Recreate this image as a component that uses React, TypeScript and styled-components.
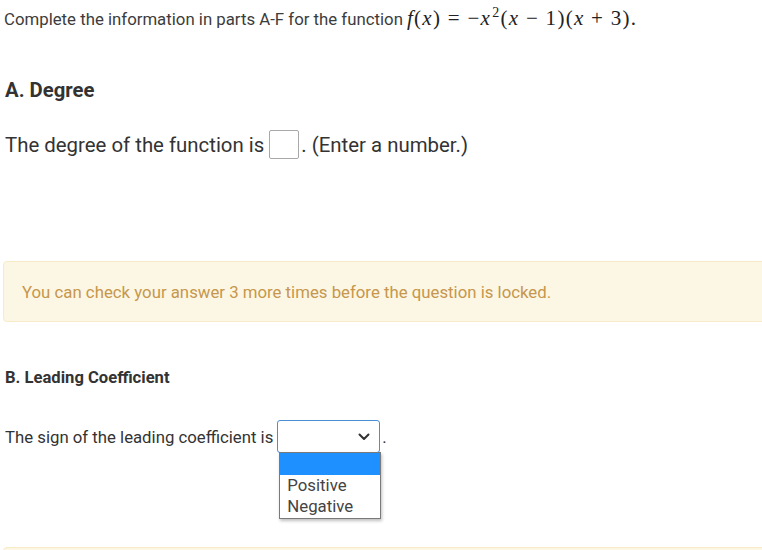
import React from "react";
import styled, { createGlobalStyle } from "styled-components";

const Global = createGlobalStyle`
  html, body { margin: 0; padding: 0; background: #fff; }
  body { font-family: Roboto, "Liberation Sans", Arial, sans-serif; color: #333; }
`;

const Page = styled.div`
  padding: 7px 0 0 4px;
  display: flex;
  flex-direction: column;
`;

const Intro = styled.div`
  font-size: 16.8px;
  line-height: 22px;
  color: #3c3c3c;
  display: flex;
  align-items: baseline;
  gap: 4px;
`;

const Math = styled.span`
  font-family: "Liberation Serif", "Times New Roman", serif;
  font-size: 21px;
  letter-spacing: 1.3px;
  color: #222;
  white-space: nowrap;
`;

const V = styled.i`
  font-style: italic;
`;

const Op = styled.span`
  padding: 0 6.5px;
`;

const Sup = styled.sup`
  font-size: 14px;
  vertical-align: 8px;
  line-height: 0;
  margin-left: 1px;
`;

const Heading = styled.h2<{ $size: number; $top: number }>`
  margin: ${(p) => p.$top}px 0 0 1px;
  font-size: ${(p) => p.$size}px;
  font-weight: 700;
  color: #333;
  line-height: 24px;
`;

const Sentence = styled.div<{ $size: number; $top: number }>`
  margin-top: ${(p) => p.$top}px;
  margin-left: 1px;
  font-size: ${(p) => p.$size}px;
  color: #333;
  display: flex;
  align-items: center;
  position: relative;
`;

const NumberBox = styled.span`
  display: inline-block;
  box-sizing: border-box;
  width: 30px;
  height: 29px;
  border: 1px solid #a8a8a8;
  border-radius: 2px;
  margin: 0 2px 0 5px;
`;

const SelectBox = styled.span`
  display: inline-flex;
  align-items: center;
  justify-content: flex-end;
  box-sizing: border-box;
  width: 103px;
  height: 33px;
  border: 1px solid #4a8fd4;
  border-radius: 3px;
  margin: 0 2px 0 4px;
  padding-right: 9px;
  position: relative;
`;

const Menu = styled.div`
  position: absolute;
  left: 1px;
  top: 31px;
  width: 102px;
  box-sizing: border-box;
  border: 1px solid #7a7a7a;
  background: #fff;
  box-shadow: 1px 2px 3px rgba(0, 0, 0, 0.25);
  display: flex;
  flex-direction: column;
  z-index: 2;
`;

const Option = styled.div<{ $active?: boolean }>`
  height: 21.5px;
  line-height: 20px;
  padding-left: 7px;
  font-size: 16.8px;
  background: ${(p) => (p.$active ? "#1e90ff" : "#fff")};
  color: #444;
`;

const Alert = styled.div<{ $top: number }>`
  box-sizing: border-box;
  margin-top: ${(p) => p.$top}px;
  margin-left: -1px;
  margin-right: -6px;
  height: 61px;
  border: 1px solid #f8ebc7;
  border-radius: 4px;
  background: #fcf6e4;
  color: #c6974c;
  font-size: 16.8px;
  display: flex;
  align-items: center;
  padding-left: 18px;
`;

const Chevron = () => (
  <svg width="12" height="8" viewBox="0 0 12 8">
    <path d="M1.5 1.5 L6 6 L10.5 1.5" fill="none" stroke="#333" strokeWidth="2" strokeLinecap="round" strokeLinejoin="round" />
  </svg>
);

export default function App() {
  return (
    <>
      <Global />
      <Page>
        <Intro>
          <span>Complete the information in parts A-F for the function</span>
          <Math>
            <V>f</V>(<V>x</V>)<Op>=</Op>−<V>x</V>
            <Sup>2</Sup>(<V>x</V>
            <Op>−</Op>1)(<V>x</V>
            <Op>+</Op>3).
          </Math>
        </Intro>
        <Heading $size={20.3} $top={48}>A. Degree</Heading>
        <Sentence $size={20.4} $top={28}>
          The degree of the function is
          <NumberBox />. (Enter a number.)
        </Sentence>
        <Alert $top={102}>You can check your answer 3 more times before the question is locked.</Alert>
        <Heading $size={16.6} $top={44}>B. Leading Coefficient</Heading>
        <Sentence $size={16.75} $top={30}>
          The sign of the leading coefficient is
          <SelectBox>
            <Chevron />
            <Menu>
              <Option $active />
              <Option>Positive</Option>
              <Option>Negative</Option>
            </Menu>
          </SelectBox>
          .
        </Sentence>
        <Alert $top={94} />
      </Page>
    </>
  );
}
